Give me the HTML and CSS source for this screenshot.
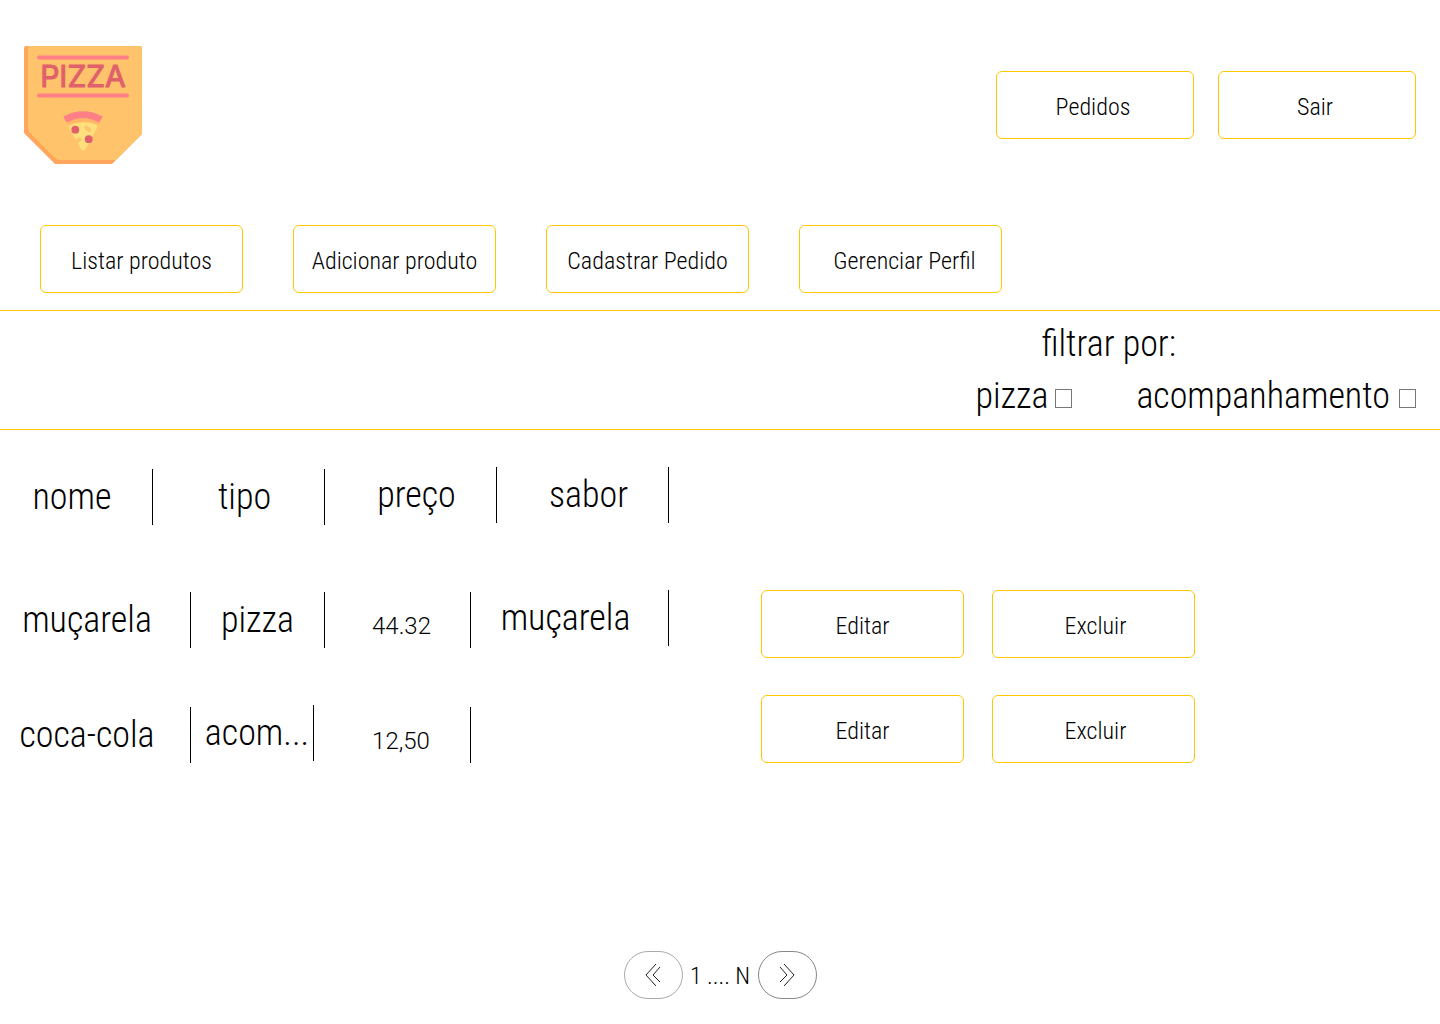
FILE: index.html
```html
<!DOCTYPE html>
<html lang="pt-BR">
<head>
<meta charset="utf-8">
<meta name="viewport" content="width=device-width, initial-scale=1">
<title>Pizza - Produtos</title>
<link rel="stylesheet" href="styles.css">
</head>
<body>
<header class="header">
  <svg class="logo" viewBox="0 0 118 118" role="img" aria-label="Pizza">
    <path fill="#ffa65c" d="M2 0H116Q118 0 118 2V88L88 118H31L0 87V2Q0 0 2 0Z"/>
    <path fill="#ffc36c" d="M4 0H116Q118 0 118 2V88L92 114H36Q33 114 31 112L6 87Q4 85 4 82Z"/>
    <path stroke="#ff7f87" stroke-width="4" stroke-linecap="round" d="M15 11.500H103M15 49.500H103"/>
    <text class="logo-text" x="59" y="41" text-anchor="middle">PIZZA</text>
    <path fill="none" stroke="#ffb765" stroke-width="3" d="M44 77Q59 71 75 77"/>
    <path fill="#ffe07c" d="M45 80Q59 73 73 79Q74 80 73 82L61 104Q59 106 57 103L45 82Z"/>
    <path fill="none" stroke="#ff7f87" stroke-width="7" d="M41 73.500Q59 64 77 73.500"/>
    <circle cx="51.300" cy="83.700" r="3.900" fill="#e0606b"/>
    <circle cx="64.700" cy="93.200" r="3.900" fill="#e0606b"/>
    <path stroke="#ffc36c" stroke-width="4" stroke-linecap="round" d="M62.500 81.500L65 84M53 95.500L55.500 93.500"/>
  </svg>
  <div class="account">
    <button class="btn" type="button">Pedidos</button>
    <button class="btn" type="button">Sair</button>
  </div>
</header>
<nav class="menu">
  <button class="btn" type="button">Listar produtos</button>
  <button class="btn" type="button">Adicionar produto</button>
  <button class="btn" type="button">Cadastrar Pedido</button>
  <button class="btn btn-profile" type="button">Gerenciar Perfil</button>
</nav>
<section class="filter">
  <div class="filter-box" role="group" aria-labelledby="filter-title">
    <div class="filter-title" id="filter-title">filtrar por:</div>
    <div class="options">
      <label class="option"><span>pizza</span><input class="tick" type="checkbox"></label>
      <label class="option option-side"><span>acompanhamento</span><input class="tick" type="checkbox"></label>
    </div>
  </div>
</section>
<main class="main">
  <table class="products">
    <thead>
      <tr class="row row-head">
        <th class="cell cell-name" scope="col">nome</th>
        <th class="cell" scope="col">tipo</th>
        <th class="cell raised" scope="col">preço</th>
        <th class="cell raised" scope="col">sabor</th>
      </tr>
    </thead>
    <tbody>
      <tr class="row row-pizza">
        <td class="cell cell-name">muçarela</td>
        <td class="cell">pizza</td>
        <td class="cell cell-price">44.32</td>
        <td class="cell cell-flavor raised">muçarela</td>
        <td class="actions">
          <button class="btn" type="button">Editar</button>
          <button class="btn btn-delete" type="button">Excluir</button>
        </td>
      </tr>
      <tr class="row row-side">
        <td class="cell cell-name">coca-cola</td>
        <td class="cell cell-short raised">acom...</td>
        <td class="cell cell-price">12,50</td>
        <td class="cell cell-empty"></td>
        <td class="actions">
          <button class="btn" type="button">Editar</button>
          <button class="btn btn-delete" type="button">Excluir</button>
        </td>
      </tr>
    </tbody>
  </table>
</main>
<footer class="pages">
  <button class="page-btn page-prev" type="button" aria-label="Anterior">
    <svg class="arrow" viewBox="0 0 18 24" fill="none" stroke="currentColor"><path d="M12 1L2 12L12 23M16 4L9 12L16 19"/></svg>
  </button>
  <span class="page-text">1 .... N</span>
  <button class="page-btn" type="button" aria-label="Próxima">
    <svg class="arrow" viewBox="0 0 18 24" fill="none" stroke="currentColor"><path d="M6 1L16 12L6 23M2 4L9 12L2 19"/></svg>
  </button>
</footer>
</body>
</html>
```
FILE: styles.css
```css
* {
  box-sizing: border-box;
}

body {
  margin: 0;
  min-height: 100vh;
  display: flex;
  flex-direction: column;
  background: #fff;
  color: #000;
  font-family: "Roboto Condensed", Roboto, sans-serif;
  font-size: 36px;
  font-weight: 300;
  line-height: 52px;
}

.header {
  display: flex;
  justify-content: space-between;
  align-items: center;
  padding: 46px 24px 0;
}

.logo {
  width: 118px;
  height: 118px;
}

.logo-text {
  font: 400 30px Inter, sans-serif;
  fill: #e0606b;
  stroke: #e0606b;
  stroke-width: 1px;
  stroke-linejoin: round;
}

.account {
  display: flex;
  gap: 24px;
}

.btn {
  width: 203px;
  height: 68px;
  padding: 4px 0 0;
  border: 1px solid #ffc700;
  border-radius: 6px;
  background: #fff;
  color: #000;
  font-family: inherit;
  font-size: 24px;
  font-weight: 300;
  line-height: 32px;
  text-align: center;
}

.account .btn {
  width: 198px;
  padding-right: 4px;
}

.menu {
  display: flex;
  flex-wrap: wrap;
  gap: 16px 50px;
  padding: 61px 40px 17px;
  border-bottom: 1px solid #ffc700;
}

.btn-profile {
  padding-left: 8px;
}

.btn-delete {
  padding-left: 4px;
}

.filter {
  display: flex;
  justify-content: flex-end;
  padding: 7px 24px;
  border-bottom: 1px solid #ffc700;
}

.filter-title {
  padding-left: 66px;
}

.options {
  display: flex;
  flex-wrap: wrap;
  gap: 0 64px;
}

.option {
  display: flex;
  align-items: center;
  gap: 7px;
}

.option-side {
  gap: 9px;
}

.tick {
  appearance: none;
  width: 17px;
  height: 19px;
  margin: 4px 0 0;
  border: 1px solid #777;
  background: #fff;
}

.main {
  padding-top: 37px;
}

.products,
.products thead,
.products tbody {
  display: block;
}

.row {
  display: grid;
  align-items: start;
}

.row-head {
  grid-template-columns: 153px 172px 172px 172px;
  margin-bottom: 65px;
}

.row-pizza {
  grid-template-columns: 191px 134px 146px 198px auto;
  margin-bottom: 37px;
}

.row-side {
  grid-template-columns: 191px 123px 157px 198px auto;
}

.cell {
  height: 56px;
  margin-top: 2px;
  padding: 2px 0 0;
  border-right: 1px solid #000;
  font-weight: 300;
  text-align: center;
}

.raised {
  margin-top: 0;
}

.row-side .cell {
  margin-top: 12px;
}

.row-side .raised {
  margin-top: 10px;
}

.row-head .cell {
  padding-left: 12px;
}

.row-head .cell-name {
  padding-left: 0;
  padding-right: 8px;
}

.cell-name {
  padding-right: 16px;
}

.cell-short {
  padding-left: 10px;
}

.cell-price {
  padding-top: 8px;
  padding-left: 8px;
  font-family: Roboto, sans-serif;
  font-size: 24px;
}

.row-side .cell-price {
  padding-left: 18px;
}

.cell-flavor {
  padding-right: 8px;
}

.cell-empty {
  border-right: 0;
}

.actions {
  display: flex;
  flex-wrap: wrap;
  gap: 28px;
  padding: 0 0 0 92px;
}

.pages {
  display: flex;
  justify-content: center;
  align-items: center;
  margin-top: auto;
  padding: 24px 0 25px;
}

.page-btn {
  display: flex;
  justify-content: center;
  align-items: center;
  width: 59px;
  height: 48px;
  padding: 0;
  border: 1px solid #888;
  border-radius: 24px;
  background: #fff;
  color: #222;
}

.page-prev {
  border-color: #aaa;
}

.page-text {
  width: 75px;
  padding-top: 2px;
  font-size: 24px;
  line-height: 32px;
  text-align: center;
}

.arrow {
  width: 18px;
  height: 24px;
}
```
